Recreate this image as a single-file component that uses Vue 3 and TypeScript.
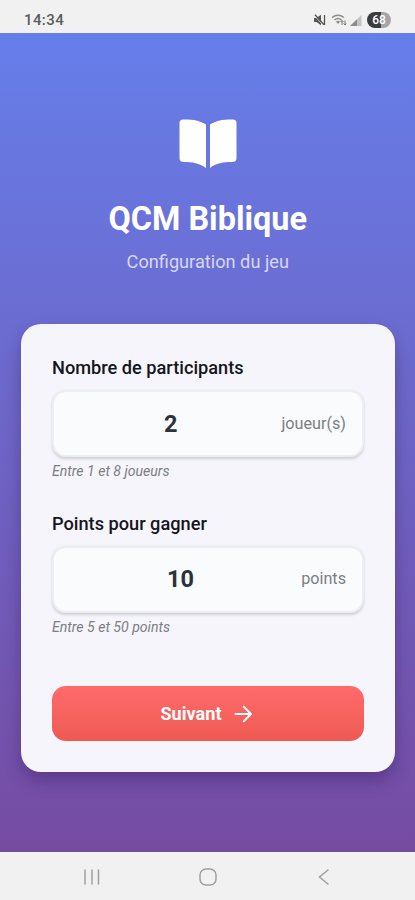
<script setup lang="ts">
import { reactive } from 'vue'

interface Field {
  id: string
  label: string
  value: string
  unit: string
  hint: string
}

const fields = reactive<Field[]>([
  { id: 'players', label: 'Nombre de participants', value: '2', unit: 'joueur(s)', hint: 'Entre 1 et 8 joueurs' },
  { id: 'points', label: 'Points pour gagner', value: '10', unit: 'points', hint: 'Entre 5 et 50 points' },
])
</script>

<template>
  <div class="screen">
    <header class="status">
      <span class="time">14:34</span>
      <div class="indicators">
        <svg class="mute" width="13" height="12" viewBox="0 0 13 12">
          <path d="M1 4h2.5L8 .8v10.4L3.500 8H1z" fill="#555" />
          <path d="M1 1l9 10" stroke="#efefef" stroke-width="1" />
          <path d="M2 .8l9 10M11.500 1v10" stroke="#555" stroke-width="1.300" fill="none" />
        </svg>
        <svg class="wifi" width="16" height="12" viewBox="0 0 16 12">
          <path d="M1 3.500Q7-1 13 3.500M3.500 6Q7 3 10.500 6" stroke="#8b8b8b" stroke-width="1.500" fill="none" />
          <path d="M5 7.500Q7 6 9 7.500L7 10z" fill="#8b8b8b" />
          <path d="M11 11V6.500M9.500 8L11 6.500 12.500 8M14 6.500V11M12.700 9.500L14 11l1.300-1.500" stroke="#777" fill="none" />
        </svg>
        <svg class="signal" width="12" height="11" viewBox="0 0 12 11">
          <path d="M0 11L11.500 0v11z" fill="#c3c3c3" />
          <path d="M0 11L7 4.300V11z" fill="#8d8d8d" />
        </svg>
        <span class="battery">68</span>
      </div>
    </header>

    <main class="content">
      <section class="hero">
        <svg class="book" width="58" height="50" viewBox="0 0 58 50">
          <path d="M4 .5C13 .3 21 1.500 27 5.500V49C20 44 14 43 4.500 43Q.5 43 .5 39V4Q.5.5 4 .5z" />
          <path d="M54 .5C45 .3 37 1.500 31 5.500V49C37 44 44 43 53.500 43Q57.500 43 57.500 39V4Q57.500.5 54 .5z" />
        </svg>
        <h1 class="title">QCM Biblique</h1>
        <p class="subtitle">Configuration du jeu</p>
      </section>

      <form class="card" @submit.prevent>
        <div v-for="field in fields" :key="field.id" class="field">
          <label class="label" :for="field.id">{{ field.label }}</label>
          <div class="box">
            <input :id="field.id" v-model="field.value" class="value" type="text" inputmode="numeric" />
            <span class="unit">{{ field.unit }}</span>
          </div>
          <p class="hint">{{ field.hint }}</p>
        </div>
        <button class="next" type="submit">
          <span>Suivant</span>
          <svg width="19" height="18" viewBox="0 0 19 18">
            <path d="M1.500 9H17M9.800 1.800L17 9l-7.200 7.200" fill="none" stroke="#fff" stroke-width="2" stroke-linecap="round" stroke-linejoin="round" />
          </svg>
        </button>
      </form>
    </main>

    <nav class="navbar">
      <svg width="18" height="18" viewBox="0 0 18 18"><path d="M2 1.500v15M9 1.500v15M15.500 1.500v15" /></svg>
      <svg width="18" height="18" viewBox="0 0 18 18"><rect x="1" y="1" width="16" height="16" rx="6" /></svg>
      <svg width="18" height="18" viewBox="0 0 18 18"><path d="M13.500 1.500L4.500 9l9 7.500" /></svg>
    </nav>
  </div>
</template>

<style>
body {
  margin: 0;
}
</style>

<style scoped>
.screen {
  display: flex;
  flex-direction: column;
  height: 900px;
  font-family: Roboto, "Liberation Sans", sans-serif;
  background: #f1f1f1;
}
.status {
  display: flex;
  align-items: center;
  justify-content: space-between;
  box-sizing: border-box;
  height: 33px;
  padding: 7px 24px 0;
}
.time {
  font-size: 15px;
  line-height: 18px;
  font-weight: 500;
  letter-spacing: 0.4px;
  color: #5c5c5c;
}
.indicators {
  display: flex;
  align-items: center;
}
.wifi {
  margin-left: 5px;
}
.signal {
  margin-left: 3px;
}
.battery {
  margin-left: 5px;
  width: 24px;
  height: 16px;
  border-radius: 8px;
  background: linear-gradient(90deg, #3c3c3c 60%, #a5a5a5 60%);
  color: #fff;
  font-size: 12px;
  line-height: 16px;
  font-weight: 500;
  text-align: center;
}
.content {
  flex: 1;
  box-sizing: border-box;
  padding: 86px 20.5px 0 21px;
  background: linear-gradient(180deg, #667eea, #764ba2);
}
.hero {
  display: flex;
  flex-direction: column;
  align-items: center;
  height: 205px;
}
.book {
  fill: #fff;
  flex: none;
}
.title {
  margin: 30px 0 0;
  font-size: 32.4px;
  line-height: 40px;
  font-weight: 700;
  color: #fff;
  white-space: nowrap;
}
.subtitle {
  margin: 11px 0 0;
  font-size: 18.2px;
  line-height: 24px;
  color: #d6d8f7;
}
.card {
  display: flex;
  flex-direction: column;
  box-sizing: border-box;
  height: 448px;
  padding: 31px 30.5px 31px 31px;
  border-radius: 20px;
  background: #f6f5fb;
  box-shadow: 0 9px 16px rgba(40, 20, 80, 0.34);
}
.field {
  height: 155.5px;
}
.label {
  display: block;
  height: 35px;
  font-size: 18.2px;
  line-height: 26px;
  font-weight: 500;
  color: #15151b;
}
.box {
  display: flex;
  align-items: center;
  box-sizing: border-box;
  height: 67px;
  padding: 0 16px;
  border: 2px solid #eeeef2;
  border-radius: 14px;
  background: #f9fbfd;
  box-shadow: 0 1.5px 3px rgba(0, 0, 0, 0.16);
}
.value {
  flex: 1;
  min-width: 0;
  padding: 0;
  border: 0;
  outline: 0;
  background: transparent;
  font-family: inherit;
  font-size: 23.5px;
  line-height: 30px;
  font-weight: 700;
  text-align: center;
  color: #2b323b;
}
.unit {
  margin-left: 10px;
  font-size: 16.2px;
  line-height: 22px;
  color: #7b7f83;
}
.hint {
  margin: 5px 0 0;
  font-size: 14.1px;
  line-height: 18px;
  font-style: italic;
  color: #7c7d83;
}
.next {
  display: flex;
  align-items: center;
  justify-content: center;
  gap: 12px;
  height: 55px;
  margin-top: 20px;
  padding: 0 3px 0 0;
  border: 0;
  border-radius: 14px;
  background: linear-gradient(180deg, #ff6b6b, #ee5a52);
  font-family: inherit;
  font-size: 18.1px;
  font-weight: 700;
  color: #fff;
}
.navbar {
  display: flex;
  align-items: center;
  justify-content: space-between;
  box-sizing: border-box;
  height: 48px;
  padding: 2px 82px 0 83px;
}
.navbar svg {
  fill: none;
  stroke: #a0a0a0;
  stroke-width: 1.5;
}
</style>
